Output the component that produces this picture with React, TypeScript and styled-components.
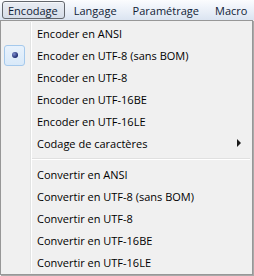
import React from "react";
import styled, { createGlobalStyle } from "styled-components";

const Global = createGlobalStyle`
  html, body { margin: 0; padding: 0; background: #f0f0f0; }
  body { font-family: "Open Sans", "Liberation Sans", Arial, sans-serif; font-size: 11px; }
  * { box-sizing: border-box; }
`;

const Page = styled.div`
  width: 254px;
  height: 276px;
  overflow: hidden;
`;

const MenuBar = styled.div`
  height: 20px;
  display: flex;
  align-items: center;
  padding-left: 2px;
  background: linear-gradient(#fbfcfe, #e8eef7 60%, #dbe4f1);
`;

const BarItem = styled.div<{ $open?: boolean }>`
  height: 18px;
  display: flex;
  align-items: center;
  padding: 0 6px 0 5px;
  margin-right: 3px;
  color: #101c36;
  white-space: nowrap;
  border: 1px solid ${(p) => (p.$open ? "#62666c" : "transparent")};
  border-radius: 3px;
  background: ${(p) => (p.$open ? "linear-gradient(#e9edf3, #d6dde8)" : "none")};
  box-shadow: ${(p) => (p.$open ? "inset 0 1px 0 rgba(255,255,255,0.6)" : "none")};
`;

const Dropdown = styled.div`
  width: 253px;
  border: 1px solid #979797;
  background: #f0f0f0;
  padding: 1px 0;
  box-shadow: 1px 1px 0 #a9a9a9;
  display: flex;
  flex-direction: column;
`;

const Row = styled.div`
  height: 22px;
  display: flex;
  align-items: center;
`;

const Gutter = styled.div`
  width: 31px;
  height: 100%;
  flex-shrink: 0;
  display: flex;
  align-items: center;
  justify-content: center;
  padding-left: 2px;
  padding-right: 5px;
  border-right: 1px solid #ffffff;
  box-shadow: inset -1px 0 0 #e2e3e3;
`;

const Check = styled.div`
  width: 21px;
  height: 21px;
  border: 1px solid #a5c9ec;
  border-radius: 3px;
  background: linear-gradient(#e8f2fc, #d9e9f9);
  display: flex;
  align-items: center;
  justify-content: center;
`;

const Dot = styled.div`
  width: 6px;
  height: 6px;
  border-radius: 50%;
  background: radial-gradient(circle at 35% 35%, #7f8fd0, #1b2a70 70%);
`;

const Label = styled.div`
  flex: 1;
  padding-left: 5px;
  color: #000;
  white-space: nowrap;
`;

const Arrow = styled.div`
  width: 0;
  height: 0;
  margin-right: 11px;
  border-top: 4px solid transparent;
  border-bottom: 4px solid transparent;
  border-left: 4px solid #1a1a1a;
`;

const Separator = styled.div`
  height: 9px;
  display: flex;
  align-items: center;
`;

const SepLine = styled.div`
  flex: 1;
  margin-right: 2px;
  height: 2px;
  border-top: 1px solid #e0e0e0;
  border-bottom: 1px solid #ffffff;
`;

type Item = { label: string; checked?: boolean; sub?: boolean } | "sep";

const items: Item[] = [
  { label: "Encoder en ANSI" },
  { label: "Encoder en UTF-8 (sans BOM)", checked: true },
  { label: "Encoder en UTF-8" },
  { label: "Encoder en UTF-16BE" },
  { label: "Encoder en UTF-16LE" },
  { label: "Codage de caractères", sub: true },
  "sep",
  { label: "Convertir en ANSI" },
  { label: "Convertir en UTF-8 (sans BOM)" },
  { label: "Convertir en UTF-8" },
  { label: "Convertir en UTF-16BE" },
  { label: "Convertir en UTF-16LE" },
];

export default function App() {
  return (
    <Page>
      <Global />
      <MenuBar>
        <BarItem $open>Encodage</BarItem>
        <BarItem>Langage</BarItem>
        <BarItem>Paramétrage</BarItem>
        <BarItem>Macro</BarItem>
      </MenuBar>
      <Dropdown>
        {items.map((it, i) =>
          it === "sep" ? (
            <Separator key={i}>
              <Gutter />
              <SepLine />
            </Separator>
          ) : (
            <Row key={i}>
              <Gutter>
                {it.checked && (
                  <Check>
                    <Dot />
                  </Check>
                )}
              </Gutter>
              <Label>{it.label}</Label>
              {it.sub && <Arrow />}
            </Row>
          )
        )}
      </Dropdown>
    </Page>
  );
}
